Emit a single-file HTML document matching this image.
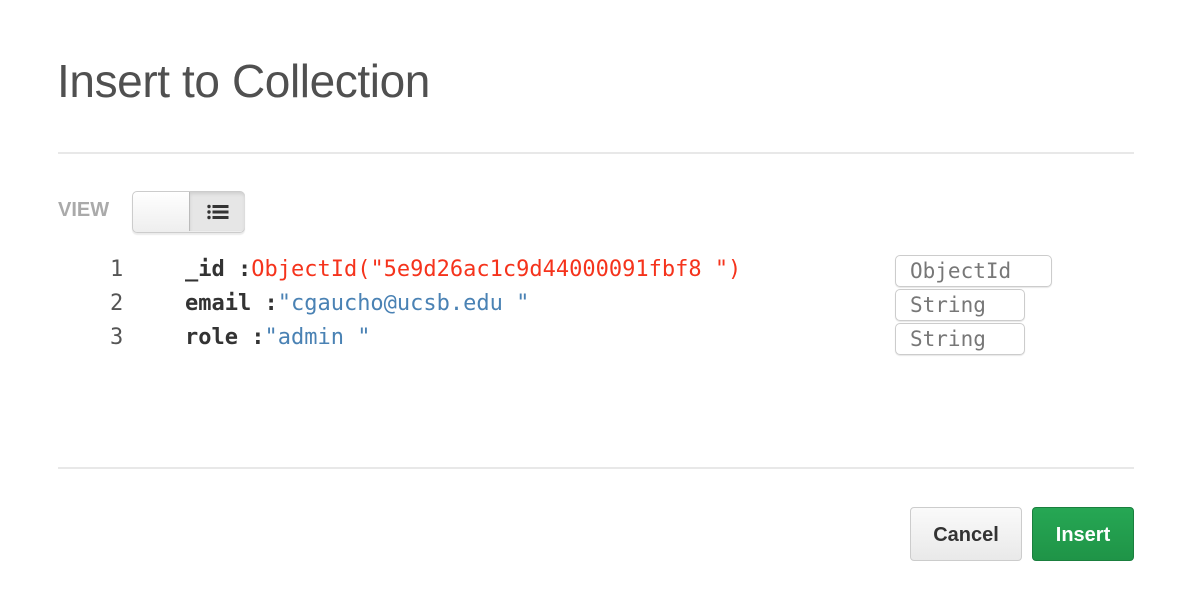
<!DOCTYPE html>
<html><head><style>
body{margin:0;width:1190px;height:614px;background:#fff;font-family:"Liberation Sans",Arial,sans-serif;position:relative;overflow:hidden}
.abs{position:absolute}
h1{position:absolute;left:57px;top:54px;margin:0;font-weight:normal;font-size:46px;color:#505050;letter-spacing:-0.4px}
.hr{position:absolute;left:58px;width:1076px;height:2px;background:#e8e8e8}
.mono{font-family:"DejaVu Sans Mono","Liberation Mono",monospace;font-size:22px;white-space:pre}
.num{color:#555;position:absolute;left:110px}
.key{color:#333;font-weight:bold;position:absolute;left:185px}
.red{color:#f5331c;font-weight:normal}.blue{color:#4a82b4;font-weight:normal}
.tb{position:absolute;left:895px;height:32px;border:1px solid #ccc;border-radius:5px;box-shadow:0 1px 1px rgba(0,0,0,.1);color:#777;box-sizing:border-box;padding-left:14px;line-height:30px;font-size:21px}
.btn{position:absolute;top:507px;height:54px;border-radius:4px;box-sizing:border-box;font-weight:bold;font-size:20px;text-align:center;line-height:54px}
</style></head><body>
<h1>Insert to Collection</h1>
<div class="hr" style="top:152px"></div>
<div class="abs" style="left:58px;top:199px;font-weight:bold;font-size:20px;color:#aaa">VIEW</div>
<div class="abs" style="left:132px;top:191px;width:113px;height:42px;border:1px solid #ccc;border-radius:5px;background:linear-gradient(#fff,#eee);box-sizing:border-box;box-shadow:0 2px 1px rgba(0,0,0,.08)"></div>
<div class="abs" style="left:189px;top:192px;width:55px;height:39px;background:#e6e6e6;border-left:1px solid #bbb;border-radius:0 4px 4px 0;box-shadow:inset 0 2px 3px rgba(0,0,0,.1)">
<svg width="55" height="39" viewBox="0 0 55 39"><g fill="#333"><circle cx="19" cy="14.5" r="1.7"/><circle cx="19" cy="20" r="1.7"/><circle cx="19" cy="25.5" r="1.7"/><rect x="22.5" y="13" width="16" height="3"/><rect x="22.5" y="18.5" width="16" height="3"/><rect x="22.5" y="24" width="16" height="3"/></g></svg></div>

<div class="mono">
<div class="num" style="top:257px">1</div><div class="key" style="top:257px">_id :<span class="red">ObjectId("5e9d26ac1c9d44000091fbf8 ")</span></div>
<div class="num" style="top:291px">2</div><div class="key" style="top:291px">email :<span class="blue">"cgaucho@ucsb.edu "</span></div>
<div class="num" style="top:325px">3</div><div class="key" style="top:325px">role :<span class="blue">"admin "</span></div>
<div class="tb" style="top:255px;width:157px">ObjectId</div>
<div class="tb" style="top:289px;width:130px">String</div>
<div class="tb" style="top:323px;width:130px">String</div>
</div>

<div class="hr" style="top:467px"></div>
<div class="btn" style="left:910px;width:112px;border:1px solid #ccc;background:linear-gradient(#fafafa,#e9e9e9);color:#333">Cancel</div>
<div class="btn" style="left:1032px;width:102px;border:1px solid #1a7f3e;background:linear-gradient(#26a754,#1f9447);color:#fff">Insert</div>
</body></html>
